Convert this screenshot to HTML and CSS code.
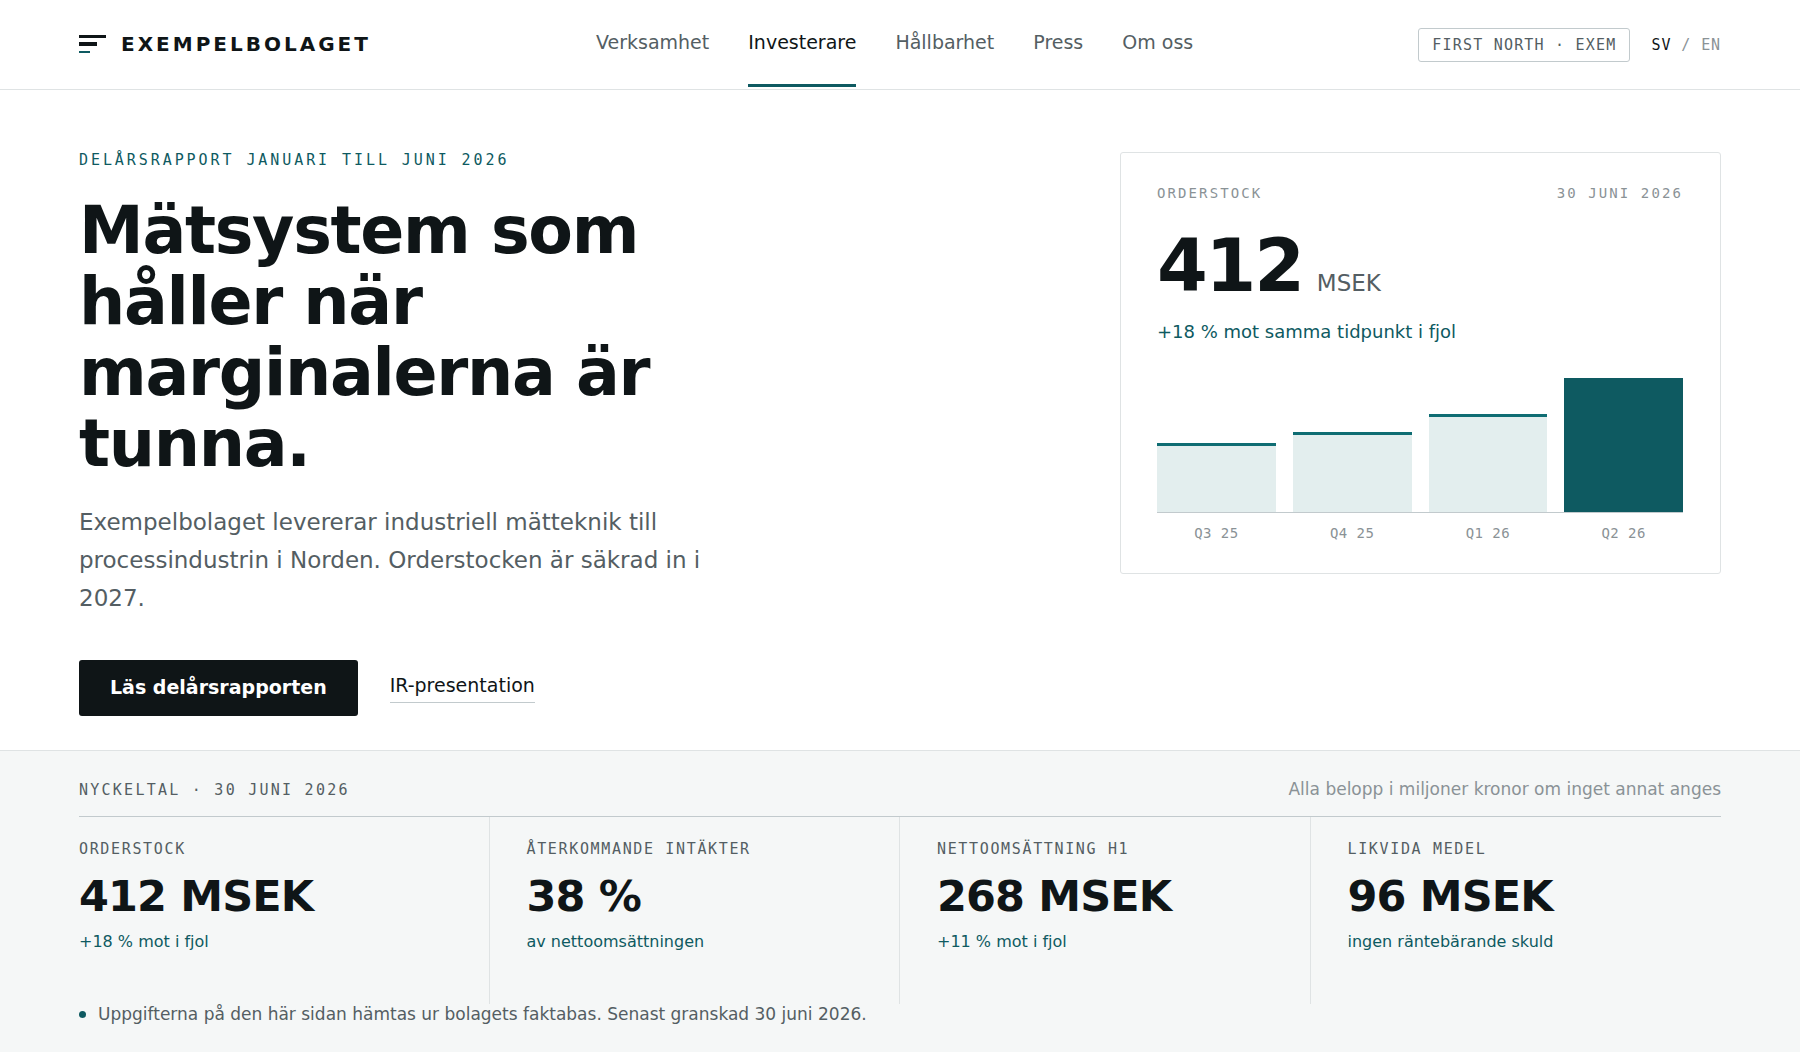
FILE: index.html
```html
<!DOCTYPE html>
<html lang="sv">
<head>
<meta charset="utf-8">
<meta name="viewport" content="width=device-width, initial-scale=1">
<title>Exempelbolaget – Investerare</title>
<link rel="stylesheet" href="styles.css">
</head>
<body>
<header class="header">
  <a class="brand" href="#">
    <svg class="brand-mark" width="27" height="20" viewBox="0 0 27 20" aria-hidden="true">
      <rect x="0" y="1" width="27" height="3" fill="#0f1517"/>
      <rect x="0" y="8" width="18" height="4" fill="#0f1517"/>
      <rect x="0" y="17" width="11" height="2" fill="#0e5a61"/>
    </svg>
    <span class="brand-name">EXEMPELBOLAGET</span>
  </a>
  <nav class="nav" aria-label="Huvudmeny">
    <a href="#">Verksamhet</a>
    <a class="active" href="#" aria-current="page">Investerare</a>
    <a href="#">Hållbarhet</a>
    <a href="#">Press</a>
    <a href="#">Om oss</a>
  </nav>
  <div class="meta">
    <span class="ticker">FIRST NORTH · EXEM</span>
    <span class="lang"><a class="current" href="#">SV</a> / <a href="#">EN</a></span>
  </div>
</header>

<main>
  <section class="hero">
    <div class="copy">
      <p class="eyebrow">DELÅRSRAPPORT JANUARI TILL JUNI 2026</p>
      <h1>Mätsystem som håller när marginalerna är tunna.</h1>
      <p class="lead">Exempelbolaget levererar industriell mätteknik till processindustrin i Norden. Orderstocken är säkrad in i 2027.</p>
      <div class="actions">
        <button class="button" type="button">Läs delårsrapporten</button>
        <a class="text-link" href="#">IR-presentation</a>
      </div>
    </div>

    <article class="card">
      <div class="card-head"><span>ORDERSTOCK</span><span>30 JUNI 2026</span></div>
      <p class="amount"><strong>412</strong><span>MSEK</span></p>
      <p class="change">+18 % mot samma tidpunkt i fjol</p>
      <div class="chart">
        <div class="bar" style="height: 69px"></div>
        <div class="bar" style="height: 80px"></div>
        <div class="bar" style="height: 98px"></div>
        <div class="bar latest" style="height: 134px"></div>
      </div>
      <div class="periods"><span>Q3 25</span><span>Q4 25</span><span>Q1 26</span><span>Q2 26</span></div>
    </article>
  </section>

  <section class="figures">
    <div class="figures-head">
      <h2>NYCKELTAL · 30 JUNI 2026</h2>
      <p>Alla belopp i miljoner kronor om inget annat anges</p>
    </div>
    <dl class="grid">
      <div class="cell"><dt>ORDERSTOCK</dt><dd class="value">412 MSEK</dd><dd class="detail">+18 % mot i fjol</dd></div>
      <div class="cell"><dt>ÅTERKOMMANDE INTÄKTER</dt><dd class="value">38 %</dd><dd class="detail">av nettoomsättningen</dd></div>
      <div class="cell"><dt>NETTOOMSÄTTNING H1</dt><dd class="value">268 MSEK</dd><dd class="detail">+11 % mot i fjol</dd></div>
      <div class="cell"><dt>LIKVIDA MEDEL</dt><dd class="value">96 MSEK</dd><dd class="detail">ingen räntebärande skuld</dd></div>
    </dl>
    <p class="note">Uppgifterna på den här sidan hämtas ur bolagets faktabas. Senast granskad 30 juni 2026.</p>
  </section>
</main>
</body>
</html>
```
FILE: styles.css
```css
:root {
  --ink: #0f1517;
  --muted: #545e63;
  --faint: #8a9296;
  --teal: #0e5a61;
  --line: #dfe3e4;
  --line-strong: #c2cacd;
  --gutter: 79px;
  --mono: "DejaVu Sans Mono", monospace;
}

* { box-sizing: border-box; }

body, h1, h2, p, dl, dd { margin: 0; }

body {
  background: #fff;
  color: var(--ink);
  font-family: "DejaVu Sans", sans-serif;
  font-size: 19px;
}

a { color: inherit; text-decoration: none; }

.header {
  display: flex;
  justify-content: space-between;
  align-items: center;
  min-height: 90px;
  padding: 0 var(--gutter);
  border-bottom: 1px solid var(--line);
}

.brand { display: flex; align-items: center; gap: 15px; padding-bottom: 2px; }
.brand-mark { flex: none; }
.brand-name { font-size: 20px; line-height: 24px; font-weight: 700; letter-spacing: 3px; }

.nav { display: flex; gap: 39px; color: var(--muted); }
.nav a { padding: 29px 0 31px; line-height: 22px; border-bottom: 3px solid transparent; }
.nav .active { color: var(--ink); border-color: var(--teal); }

.meta {
  display: flex;
  justify-content: flex-end;
  align-items: center;
  gap: 21px;
  font: 15px/18px var(--mono);
  white-space: nowrap;
}
.ticker { padding: 7px 13px; border: 1px solid var(--line-strong); border-radius: 3px; letter-spacing: 0.08em; color: var(--muted); }
.lang { letter-spacing: 0.06em; color: var(--faint); }
.lang .current { color: var(--ink); }

.hero {
  display: grid;
  grid-template-columns: minmax(0, 1fr) minmax(0, 601px);
  gap: 64px;
  align-items: start;
  padding: 62px var(--gutter) 34px;
}
.copy { max-width: 640px; }
.eyebrow { font: 15px/16px var(--mono); letter-spacing: 0.195em; color: var(--teal); }
h1 { margin-top: 27px; font-size: 65px; line-height: 71px; letter-spacing: -0.02em; }
.lead { margin-top: 24px; font-size: 23px; line-height: 38px; color: var(--muted); }

.actions { display: flex; align-items: center; gap: 32px; margin-top: 43px; }
.button {
  padding: 16px 31px 18px;
  border: 0;
  border-radius: 3px;
  background: var(--ink);
  color: #fff;
  font: 700 19px/22px "DejaVu Sans", sans-serif;
}
.text-link { padding-bottom: 6px; border-bottom: 1px solid var(--line-strong); line-height: 22px; }

.card { padding: 31px 37px 32px 36px; border: 1px solid var(--line); border-radius: 3px; }
.card-head { display: flex; justify-content: space-between; font: 14px/18px var(--mono); letter-spacing: 0.15em; color: var(--faint); }
.amount { display: flex; align-items: baseline; gap: 14px; margin-top: 27px; line-height: 73px; }
.amount strong { font-size: 73px; letter-spacing: -0.03em; }
.amount span { font-size: 23px; line-height: 28px; color: var(--muted); }
.change { margin-top: 19px; font-size: 18px; line-height: 22px; color: var(--teal); }
.chart { display: flex; align-items: flex-end; gap: 17px; margin-top: 35px; border-bottom: 1px solid var(--line-strong); }
.bar { flex: 1; border-top: 3px solid #0f6d73; background: #e3eeee; }
.latest { border-color: var(--teal); background: var(--teal); }
.periods { display: flex; gap: 17px; margin-top: 12px; font: 14px/16px var(--mono); letter-spacing: 0.03em; color: var(--faint); }
.periods span { flex: 1; text-align: center; }

.figures { padding: 28px var(--gutter); border-top: 1px solid var(--line); background: #f5f7f7; }
.figures-head {
  display: flex;
  justify-content: space-between;
  align-items: baseline;
  padding-bottom: 16px;
  border-bottom: 1px solid var(--line-strong);
}
.figures-head h2 { font: 15px/20px var(--mono); letter-spacing: 0.15em; color: var(--muted); }
.figures-head p { font-size: 17px; line-height: 20px; color: var(--faint); }

.grid { display: grid; grid-template-columns: repeat(4, 1fr); }
.cell { padding: 23px 0 52px 37px; border-right: 1px solid var(--line); }
.cell:first-child { padding-left: 0; }
.cell:last-child { border-right: 0; }
.cell dt { font: 15px/18px var(--mono); letter-spacing: 0.11em; color: var(--muted); }
.value { margin-top: 16px; font-size: 43px; line-height: 44px; font-weight: 700; letter-spacing: -0.02em; }
.detail { margin-top: 14px; font-size: 16px; line-height: 20px; color: var(--teal); }

.note { display: flex; align-items: center; gap: 12px; font-size: 17px; line-height: 20px; color: var(--muted); }
.note::before { content: ""; flex: none; width: 7px; height: 7px; border-radius: 50%; background: var(--teal); }

@media (max-width: 1200px) {
  .header { flex-direction: column; align-items: flex-start; gap: 16px; padding-block: 16px; }
  .nav { flex-wrap: wrap; }
  .nav a { padding: 8px 0; }
  .hero { grid-template-columns: minmax(0, 1fr); }
  .grid { grid-template-columns: repeat(2, 1fr); }
}
```
